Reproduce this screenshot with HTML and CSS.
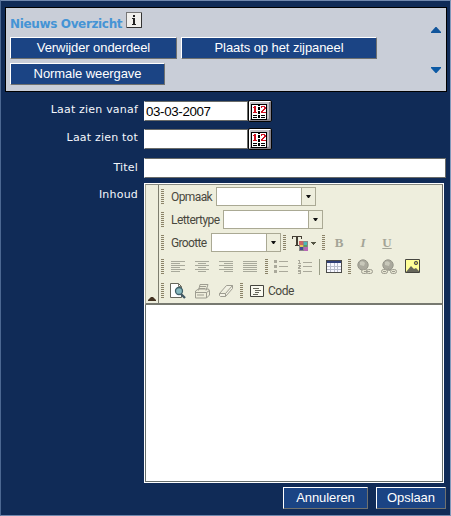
FILE: index.html
```html
<!DOCTYPE html>
<html lang="nl">
<head>
<meta charset="utf-8">
<title>Nieuws Overzicht</title>
<link rel="stylesheet" href="styles.css">
</head>
<body>
<svg class="defs" width="0" height="0">
  <symbol id="calendar" viewBox="0 0 16 16">
    <path fill="#000" d="M0 0h16v16H0z"/>
    <path fill="#fff" d="M1 1h6v14H1zM9 1h6v14H9zM7 2h2v1H7zM7 6h2v1H7zM7 10h2v1H7zM7 14h2v1H7z"/>
    <path fill="#d01020" d="M3 2h2v6h1v1H2V8h1V4H2V3h1zM10 2h4v1h1v2h-1v1h-1v1h-1v1h3v1h-5V7h1V6h1V5h1V3h-2v1h-1z"/>
    <path fill="#000" d="M2 11h4v1H2zM2 13h4v1H2zM10 11h4v1h-4zM10 13h4v1h-4z"/>
  </symbol>
</svg>
<main class="page">
  <header class="panel">
    <div class="panel-main">
      <div class="heading"><h1>Nieuws Overzicht</h1>
        <svg class="info" width="16" height="16"><rect x=".5" y=".5" width="15" height="15" fill="#f1f0ed" stroke="#777"/><path d="M15.5 1v14.5H1" fill="none" stroke="#333"/><path fill="#222" d="M7 3h2v2H7zM6 6h3v6h1v1H6v-1h1V7H6z"/></svg>
      </div>
      <div class="actions">
        <button class="btn remove">Verwijder onderdeel</button>
        <button class="btn place">Plaats op het zijpaneel</button>
        <button class="btn normal">Normale weergave</button>
      </div>
    </div>
    <div class="arrows">
      <svg width="10" height="6"><path fill="#11559b" d="M4.5 0h1L10 5v1H0V5z"/></svg>
      <svg width="10" height="6"><path fill="#0c5aa5" d="M0 0h10v1L5.5 6h-1L0 1z"/></svg>
    </div>
  </header>

  <form class="form">
    <div class="field date"><label for="from">Laat zien vanaf</label><input id="from" value="03-03-2007"><button class="cal" type="button" aria-label="Kalender"><svg width="16" height="16"><use href="#calendar"/></svg></button></div>
    <div class="field date second"><label for="to">Laat zien tot</label><input id="to"><button class="cal" type="button" aria-label="Kalender"><svg width="16" height="16"><use href="#calendar"/></svg></button></div>
    <div class="field title"><label for="title">Titel</label><input id="title"></div>
    <div class="field content"><label>Inhoud</label>
      <div class="editor">
        <div class="toolbar">
          <div class="collapse"><svg width="8" height="4"><path fill="#432" d="M3 0h2l3 3v1H0V3z"/></svg></div>
          <div class="tools">
            <div class="row"><i class="grip"></i><span class="name format">Opmaak</span><span class="select"><b></b></span></div>
            <div class="row"><i class="grip"></i><span class="name font">Lettertype</span><span class="select"><b></b></span></div>
            <div class="row"><i class="grip"></i><span class="name size">Grootte</span><span class="select small"><b></b></span><i class="grip after-select"></i>
              <svg class="color" width="25" height="16"><path fill="#443f35" d="M0 1h10v3H9V2H6v8h1v1H3v-1h1V2H1v2H0z"/><path fill="#888" d="M7 6h9v10H7z"/><path fill="#c66" d="M7 6h4v4H7z"/><path fill="#4bb8b5" d="M12 7h3v3h-3z"/><path fill="#e8c952" d="M8 10h3v2H8z"/><path fill="#5a9b63" d="M12 10h3v2h-3z"/><path fill="#454595" d="M8 12h3v3H8z"/><path fill="#b767b5" d="M12 12h4v4h-4z"/><path fill="#554" d="M19 7h5v1h-1v1h-1v1h-1V9h-1V8h-1z"/></svg>
              <i class="grip before-style"></i><span class="style bold">B</span><span class="style italic">I</span><span class="style under">U</span>
            </div>
            <div class="row icons-row"><i class="grip"></i>
              <svg class="first" width="16" height="16"><path stroke="#a8a99b" d="M1 2.5h14M1 4.5h9M1 6.5h14M1 8.5h9M1 10.5h14M1 12.5h9"/></svg>
              <svg width="16" height="16"><path stroke="#a8a99b" d="M1 2.5h14M4 4.5h8M1 6.5h14M4 8.5h8M1 10.5h14M4 12.5h8"/></svg>
              <svg width="16" height="16"><path stroke="#a8a99b" d="M1 2.5h14M6 4.5h9M1 6.5h14M6 8.5h9M1 10.5h14M6 12.5h9"/></svg>
              <svg width="16" height="16"><path stroke="#a8a99b" d="M1 2.5h14M1 4.5h14M1 6.5h14M1 8.5h14M1 10.5h14M1 12.5h14"/></svg>
              <i class="grip list-grip"></i>
              <svg class="bullets" width="16" height="16"><path fill="#aaa99b" d="M1 1h3v3H1zM1 6h3v3H1zM1 11h3v3H1zM6 2h9v1H6zM6 7h9v1H6zM6 12h9v1H6z"/></svg>
              <svg width="16" height="16"><path fill="#aaa99b" d="M1 1h2v3h1v1H1V4h1V2H1zM1 6h3v2H3v1h1v1H1V8h1V7H1zM1 11h3v4H1v-1h2v-1H1zM6 3h9v1H6zM6 7h9v1H6zM6 12h9v1H6z"/></svg>
              <i class="divider"></i>
              <svg width="16" height="16"><path fill="#4b4b48" d="M0 1h16v13H0z"/><path fill="#304078" d="M1 2h14v2H1z"/><path fill="#f8f8ff" d="M1 4h14v9H1z"/><path stroke="#b9bdcb" d="M4.5 4v9M8.5 4v9M11.5 4v9M1 7.5h14M1 10.5h14"/></svg>
              <i class="grip link-grip"></i>
              <svg class="link" width="16" height="16"><circle cx="6" cy="6" r="5.2" fill="#aaa99d" stroke="#96968a"/><path d="M3 3q3-2 5 1l-1 3-4-1" fill="#c8c8ba"/><rect x="4.5" y="10.5" width="6" height="4" rx="2" fill="#e6e5d2" stroke="#9e9d90"/><rect x="9.5" y="10.5" width="6" height="4" rx="2" fill="#e6e5d2" stroke="#9e9d90"/><path d="M7 12.5h6" stroke="#9e9d90"/></svg>
              <svg class="unlink" width="16" height="16"><circle cx="7" cy="6" r="5.2" fill="#aaa99d" stroke="#96968a"/><path d="M4 3q3-2 5 1l-1 3-4-1" fill="#c8c8ba"/><rect x=".5" y="10.5" width="6" height="4" rx="2" fill="#e6e5d2" stroke="#9e9d90"/><rect x="9.5" y="10.5" width="6" height="4" rx="2" fill="#e6e5d2" stroke="#9e9d90"/><path d="M2 12.5h3m6 0h3M7 9l2 3" stroke="#9e9d90"/></svg>
              <svg class="image" width="15" height="15"><path fill="#ffff98" stroke="#44443e" d="M.5.5h14v13H.5z"/><circle cx="11" cy="4" r="1.7" fill="#bbb44f" stroke="#555"/><path fill="#66665a" d="m1 13 5-6 3 3 2-1 3 3v1z"/></svg>
            </div>
            <div class="row"><i class="grip"></i>
              <svg class="preview" width="16" height="16"><path fill="#fff" stroke="#66665b" d="M.5.5h8l3 3v11H.5z"/><path fill="none" stroke="#77776b" d="M8.5.5v3h3"/><circle cx="9" cy="8" r="3.5" fill="#88b9bf" stroke="#3f6069" stroke-width="1.3"/><path stroke="#3f5662" stroke-width="2.3" d="m11 11 4 4"/></svg>
              <svg class="print" width="16" height="16"><path fill="#eeeddb" stroke="#9e9d91" d="M4.5 7.5 6 1.5h8l-2 6M1.5 8l3-2h10l1 2v4l-3 3H1.5zM1.5 9.5h11l3-2M12.5 9.5V15M3 12h7M6 3.5h6M5 5.5h6"/></svg>
              <svg class="eraser" width="16" height="16"><path fill="#f3f2e5" stroke="#9e9d91" d="m1.5 10.5 7-8h6l-7 8zM1.5 10.5v2l1 1h5l7-8v-3M7.5 10.5v3"/></svg>
              <i class="grip code-grip"></i>
              <svg class="code-icon" width="14" height="14"><path fill="#fafaf0" stroke="#44443e" d="M.5 1.5h13v11H.5z"/><path stroke="#65655a" d="M3 4.5h6M5 6.5h6M5 8.5h4M3 10.5h5"/></svg>
              <span class="name code">Code</span>
            </div>
          </div>
        </div>
        <div class="canvas"></div>
      </div>
    </div>
    <footer><button class="btn cancel" type="button">Annuleren</button><button class="btn save" type="button">Opslaan</button></footer>
  </form>
</main>
</body>
</html>
```
FILE: styles.css
```css
* { box-sizing: border-box; }
html, body { margin: 0; height: 516px; overflow: hidden; }
body { font: 11px "DejaVu Sans", sans-serif; color: #f4f7fc; }
svg { display: block; flex: none; }
.defs { position: absolute; }
.page {
  width: 451px;
  height: 516px;
  padding: 6px 3px 0 4px;
  background: #102b57;
  border: 1px solid #7188ad;
  border-left-color: #4c6892;
  border-right-color: #8299bb;
}
.panel {
  display: flex;
  width: 442px;
  height: 85px;
  background: #c9ced8;
  border: 1px solid #000;
}
.panel-main { width: 425px; padding: 4px 0 0 4px; }
.heading { display: flex; height: 25px; }
h1 {
  width: 116px;
  margin: 5px 0 0;
  color: #4594d5;
  font: bold 12px/14px "DejaVu Sans", sans-serif;
  letter-spacing: -.35px;
  white-space: nowrap;
}
.actions { display: flex; flex-wrap: wrap; gap: 4px; }
button { margin: 0; padding: 0; }
.btn {
  height: 22px;
  color: #fff;
  background: #1b4484;
  border: 1px solid #fff;
  border-right-color: #6f716f;
  border-bottom-color: #6f716f;
  font: 13px/18px "Liberation Sans", sans-serif;
  letter-spacing: -.08px;
  white-space: nowrap;
}
.remove { width: 167px; }
.place { width: 196px; }
.normal { width: 155px; }
.arrows { padding-top: 19px; }
.arrows svg + svg { margin-top: 34px; }
.form { padding-top: 8px; }
.field { display: flex; }
label { width: 139px; padding: 3px 6px 0 0; line-height: 14px; text-align: right; letter-spacing: .2px; }
input {
  width: 302px;
  height: 20px;
  margin: 1px 0 0;
  padding: 1px 1px 0;
  color: #000;
  background: #fff;
  border: 1px solid #696b68;
  border-left-color: #fff;
  border-radius: 0;
  font: 13.33px "Liberation Sans", sans-serif;
  letter-spacing: -.35px;
}
.date { height: 28px; }
.date input { width: 104px; }
.second { height: 29px; }
.title { height: 26px; }
.title label { padding-top: 4px; }
.content label { padding-top: 5px; }
.cal {
  width: 24px;
  height: 22px;
  padding: 1px 0 0 2px;
  background: #c3c1c5;
  border: 1px solid #050505;
  border-radius: 2px;
  box-shadow: inset 1px 1px #fff, inset -2px -2px #858189;
}
.editor {
  width: 300px;
  height: 300px;
  border: 1px solid #fff;
  background: #fff;
}
.toolbar {
  display: flex;
  height: 121px;
  background: #eeeedd;
  border-top: 1px solid #888a81;
  border-left: 1px solid #aaa995;
  border-right: 1px solid #696b67;
  border-bottom: 2px solid #777970;
}
.collapse {
  display: flex;
  align-items: flex-end;
  width: 13px;
  padding: 0 0 2px 2px;
  border-right: 1px solid #7d7d6e;
}
.tools { padding: 0 0 0 2px; }
.row { display: flex; align-items: center; height: 23px; }
.icons-row { height: 25px; }
.grip {
  width: 3px;
  height: 15px;
  flex: none;
  background: repeating-linear-gradient(#8b8369 0 1px, #eeeedd 1px 2px);
}
.name {
  display: block;
  color: #49483d;
  font: 12px/16px Roboto, sans-serif;
  white-space: nowrap;
}
.format { width: 45px; margin-left: 7px; letter-spacing: -.6px; }
.font { width: 52px; margin-left: 7px; letter-spacing: -.55px; }
.size { width: 40px; margin-left: 7px; letter-spacing: -.65px; }
.select {
  display: flex;
  justify-content: flex-end;
  width: 100px;
  height: 19px;
  background: #fff;
  border: 1px solid #aaa994;
}
.select.small { width: 70px; }
.select b {
  display: flex;
  align-items: center;
  justify-content: center;
  width: 14px;
  background: #eeeedd;
  border-left: 1px solid #aaa994;
}
.select b::after {
  content: "";
  width: 5px;
  height: 3px;
  background: #111;
  clip-path: polygon(0 0, 100% 0, 60% 100%, 40% 100%);
}
.after-select { margin-left: 2px; }
.color { margin-left: 6px; }
.before-style { margin-left: 5px; }
.style { width: 24px; color: #a4a497; font: bold 13px/16px "Liberation Serif", serif; text-align: center; }
.bold { margin-left: 2px; }
.italic { font-style: italic; }
.under { text-decoration: underline; }
.first { margin-left: 6px; }
.icons-row svg + svg { margin-left: 8px; }
.list-grip { margin-left: 7px; }
.bullets { margin-left: 5px; }
.divider { width: 1px; height: 16px; margin: 0 6px; background: #999d87; }
.link-grip { margin-left: 6px; }
.link { margin-left: 6px; }
.preview { margin-left: 6px; }
.print, .eraser { margin-left: 8px; }
.code-grip { margin-left: 6px; }
.code-icon { margin-left: 7px; }
.code { margin-left: 4px; letter-spacing: -.5px; }
.canvas { height: 177px; border: 1px solid #666e6b; border-top: 0; }
footer { display: flex; justify-content: flex-end; gap: 8px; margin-right: 1px; padding-top: 4px; }
.cancel { width: 85px; }
.save { width: 70px; }
```
